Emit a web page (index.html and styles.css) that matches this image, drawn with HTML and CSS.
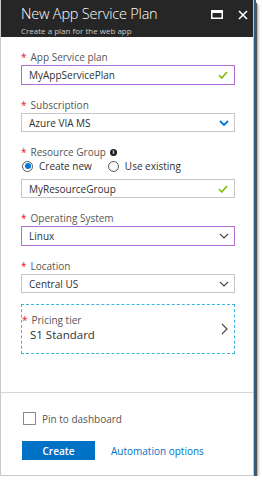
FILE: index.html
```html
<!DOCTYPE html>
<html lang="en">
<head>
    <meta charset="UTF-8">
    <meta name="viewport" content="width=device-width, initial-scale=1.0">
    <title>New App Service Plan</title>
    <link rel="stylesheet" href="styles.css">
</head>
<body>

    <div class="blade">
        <div class="bladeHead">
            <div class="titles">
                <div class="title">New App Service Plan</div>
                <div class="subtitle">Create a plan for the web app</div>
            </div>
            <div class="headIcons">
                <svg width="12" height="9" viewBox="0 0 12 9"><rect x="0.75" y="0.75" width="10.5" height="7.5" fill="none" stroke="#fff" stroke-width="1.5"/><rect x="0.5" y="0.5" width="11" height="2.5" fill="#fff"/></svg>
                <svg width="10" height="10" viewBox="0 0 10 10"><path d="M1 1 L9 9 M9 1 L1 9" stroke="#fff" stroke-width="1.6"/></svg>
            </div>
        </div>

        <div class="bladeBody">
            <div class="field">
                <div class="label"><span class="req">*</span>App Service plan</div>
                <div class="input active">
                    <span>MyAppServicePlan</span>
                    <svg class="check" width="10" height="8" viewBox="0 0 10 8"><path d="M1 4.2 L3.8 7 L9 1" fill="none" stroke="#7fba00" stroke-width="1.6"/></svg>
                </div>
            </div>

            <div class="field">
                <div class="label"><span class="req">*</span>Subscription</div>
                <div class="input">
                    <span>Azure VIA MS</span>
                    <svg class="chev" width="10" height="6" viewBox="0 0 10 6"><path d="M1 1 L5 5 L9 1" fill="none" stroke="#0078d7" stroke-width="1.8"/></svg>
                </div>
            </div>

            <div class="field">
                <div class="label"><span class="req">*</span>Resource Group
                    <span class="info">i</span>
                </div>
                <div class="radios">
                    <span class="radio on"></span><span class="radioText">Create new</span>
                    <span class="radio"></span><span class="radioText">Use existing</span>
                </div>
                <div class="input rg">
                    <span>MyResourceGroup</span>
                    <svg class="check" width="10" height="8" viewBox="0 0 10 8"><path d="M1 4.2 L3.8 7 L9 1" fill="none" stroke="#7fba00" stroke-width="1.6"/></svg>
                </div>
            </div>

            <div class="field">
                <div class="label"><span class="req">*</span>Operating System</div>
                <div class="input active">
                    <span>Linux</span>
                    <svg class="chev" width="10" height="6" viewBox="0 0 10 6"><path d="M1 1 L5 5 L9 1" fill="none" stroke="#444" stroke-width="1.1"/></svg>
                </div>
            </div>

            <div class="field">
                <div class="label"><span class="req">*</span>Location</div>
                <div class="input">
                    <span>Central US</span>
                    <svg class="chev" width="10" height="6" viewBox="0 0 10 6"><path d="M1 1 L5 5 L9 1" fill="none" stroke="#444" stroke-width="1.1"/></svg>
                </div>
            </div>

            <div class="pricing">
                <div class="pricingText">
                    <div class="pricingLabel"><span class="req">*</span>Pricing tier</div>
                    <div class="pricingValue">S1 Standard</div>
                </div>
                <svg width="7" height="12" viewBox="0 0 7 12"><path d="M1 1 L6 6 L1 11" fill="none" stroke="#444" stroke-width="1.1"/></svg>
            </div>
        </div>

        <div class="bladeFoot">
            <div class="pin"><span class="box"></span>Pin to dashboard</div>
            <div class="actions">
                <button class="createBtn">Create</button>
                <a class="link" href="#">Automation options</a>
            </div>
        </div>
    </div>

</body>
</html>
```

FILE: styles.css
```css
body {
    margin: 0;
    padding: 0;
    background: #ffffff;
    font-family: "Open Sans", "Noto Sans", sans-serif;
}

.blade {
    width: 252px;
    height: 475px;
    display: flex;
    flex-direction: column;
    background: #ffffff;
    border-left: 1px solid #c9c9c9;
    border-right: 1px solid #c4c4c4;
    border-bottom: 1px solid #c9c9c9;
    box-shadow: 2px 0 0 #2f5d7e, 3px 3px 1px #555555, 4px 5px 3px rgba(0, 0, 0, 0.35);
}

.bladeHead {
    height: 37px;
    background: #262626;
    display: flex;
    justify-content: space-between;
    padding: 0 5px 0 20px;
}

.title {
    color: #ffffff;
    font-weight: 300;
    font-size: 14.5px;
    line-height: 20px;
    margin-top: 4px;
    letter-spacing: -0.2px;
}

.subtitle {
    color: #c8c8c8;
    font-size: 8px;
    line-height: 10px;
    margin-top: 2px;
}

.headIcons {
    display: flex;
    gap: 15px;
    padding-top: 10px;
}

.bladeBody {
    flex: 1;
    padding: 13px 18px 0 20px;
}

.field {
    margin-bottom: 13px;
}

.label {
    font-size: 10px;
    line-height: 14px;
    color: #555555;
    margin-bottom: 1px;
    display: flex;
    align-items: center;
}

.req {
    color: #e81123;
    margin-right: 4px;
    font-size: 10px;
}

.info {
    display: inline-block;
    width: 7px;
    height: 7px;
    border-radius: 50%;
    background: #1e1e1e;
    color: #ffffff;
    font-size: 6px;
    line-height: 7px;
    text-align: center;
    font-weight: bold;
    margin-left: 4px;
}

.input {
    height: 17px;
    border: 1px solid #c6c6c6;
    display: flex;
    align-items: center;
    justify-content: space-between;
    padding: 0 5px 0 7px;
    font-size: 10px;
    color: #303030;
}

.input.active {
    border-color: #b270d6;
    height: 18px;
}

.input.rg {
    margin-top: 7px;
}

.check {
    margin-right: 1px;
}

.radios {
    display: flex;
    align-items: center;
    height: 12px;
    font-size: 10px;
    color: #303030;
}

.radio {
    width: 11px;
    height: 11px;
    border: 1px solid #555555;
    border-radius: 50%;
    margin-left: 1px;
    box-sizing: border-box;
    display: flex;
    align-items: center;
    justify-content: center;
}

.radio.on::after {
    content: "";
    width: 6px;
    height: 6px;
    border-radius: 50%;
    background: #0078d7;
}

.radioText {
    margin-left: 6px;
    margin-right: 15px;
}

.pricing {
    margin-top: -2px;
    height: 48px;
    border: 1px dashed #3ab4e0;
    display: flex;
    align-items: center;
    justify-content: space-between;
    padding: 0 6px 0 0;
}

.pricingText {
    padding-bottom: 2px;
}

.pricingLabel {
    font-size: 10px;
    color: #555555;
    line-height: 13px;
}

.pricingValue {
    font-size: 11.5px;
    color: #303030;
    margin-left: 8px;
    line-height: 16px;
}

.bladeFoot {
    border-top: 1px solid #d6d6d6;
    padding: 19px 0 15px 22px;
}

.pin {
    display: flex;
    align-items: center;
    font-size: 10px;
    color: #555555;
    height: 13px;
}

.box {
    width: 13px;
    height: 13px;
    border: 1px solid #8a8a8a;
    box-sizing: border-box;
    margin-right: 6px;
}

.actions {
    display: flex;
    align-items: center;
    margin-top: 16px;
}

.createBtn {
    width: 73px;
    height: 19px;
    background: #0072c6;
    border: none;
    color: #ffffff;
    font-family: inherit;
    font-weight: 600;
    font-size: 10px;
    padding: 0;
    margin-left: -1px;
}

.link {
    color: #0072c6;
    text-decoration: none;
    font-size: 10px;
    margin-left: 16px;
}
```
